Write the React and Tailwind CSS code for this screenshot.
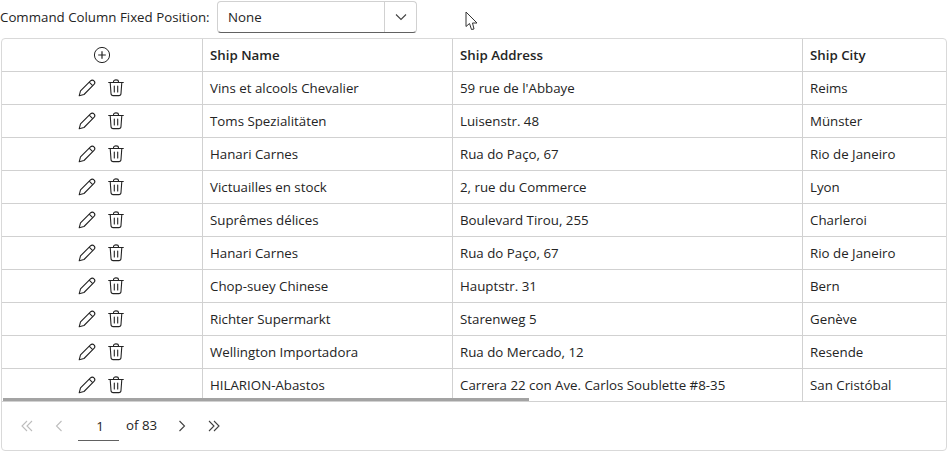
const rows = [
  ["Vins et alcools Chevalier", "59 rue de l'Abbaye", "Reims"],
  ["Toms Spezialitäten", "Luisenstr. 48", "Münster"],
  ["Hanari Carnes", "Rua do Paço, 67", "Rio de Janeiro"],
  ["Victuailles en stock", "2, rue du Commerce", "Lyon"],
  ["Suprêmes délices", "Boulevard Tirou, 255", "Charleroi"],
  ["Hanari Carnes", "Rua do Paço, 67", "Rio de Janeiro"],
  ["Chop-suey Chinese", "Hauptstr. 31", "Bern"],
  ["Richter Supermarkt", "Starenweg 5", "Genève"],
  ["Wellington Importadora", "Rua do Mercado, 12", "Resende"],
  ["HILARION-Abastos", "Carrera 22 con Ave. Carlos Soublette #8-35", "San Cristóbal"],
];

const Pencil = () => (
  <svg width="18" height="18" viewBox="0 0 18 18" fill="none" stroke="#242424" strokeWidth="1.1" strokeLinejoin="round">
    <path d="M1.2 16.8 L2.5 11.9 L12.5 1.9 C13.5 0.9 15.1 0.9 16 1.9 C17 2.9 17 4.4 16 5.4 L6 15.5 Z" />
    <path d="M11.2 3.2 L14.7 6.7" />
  </svg>
);
const Trash = () => (
  <svg width="16" height="18" viewBox="0 0 16 18" fill="none" stroke="#242424" strokeWidth="1.1" strokeLinecap="round">
    <path d="M0.7 3.5 H15.3" />
    <path d="M5.5 3.5 V2.8 C5.5 1.6 6.5 0.9 8 0.9 C9.5 0.9 10.5 1.6 10.5 2.8 V3.5" />
    <path d="M2.2 3.5 L3 14.5 C3.1 15.9 4 16.6 5.2 16.6 H10.8 C12 16.6 12.9 15.9 13 14.5 L13.8 3.5" />
    <path d="M6.3 7 V13" />
    <path d="M9.7 7 V13" />
  </svg>
);
const Plus = () => (
  <svg width="18" height="18" viewBox="0 0 18 18" fill="none" stroke="#242424" strokeWidth="1">
    <circle cx="9" cy="9" r="7.6" />
    <path d="M9 5.2 V12.8 M5.2 9 H12.8" strokeWidth="1.2" />
  </svg>
);
const Chev = ({ d, color = "#424242" }) => (
  <svg width="16" height="16" viewBox="0 0 16 16" fill="none" stroke={color} strokeWidth="1.1">
    <path d={d} />
  </svg>
);

export default function App() {
  return (
    <div className="relative w-[948px] h-[452px] bg-white overflow-hidden text-[13.3px] text-[#242424] font-['Open_Sans','Noto_Sans',sans-serif]">
      <div className="h-[38px] flex items-start pt-px">
        <label className="h-[32px] pt-px flex items-center w-[217px] shrink-0 whitespace-nowrap">Command Column Fixed Position:</label>
        <div className="w-[200px] h-[32px] flex rounded border border-[#d1d1d1] border-b-[#616161]">
          <span className="flex-1 pl-[10px] pt-px flex items-center border-r border-[#d1d1d1]">None</span>
          <span className="w-[31px] flex items-center justify-center">
            <Chev d="M3 5.5 L8 10.5 L13 5.5" />
          </span>
        </div>
      </div>
      <svg className="absolute left-[465px] top-[11px]" width="14" height="20" viewBox="0 0 14 20" fill="#fff" stroke="#333" strokeWidth="1">
        <path d="M1 1 V15.5 L4.5 12.5 L6.5 18.5 L9 18 L7.5 12 L12 12 Z" />
      </svg>

      <div className="relative ml-px w-[946px] h-[413px] border border-[#d9d9d9] rounded-sm overflow-hidden flex flex-col">
        <div className="flex h-[33px] border-b border-[#d1d1d1] font-semibold shrink-0">
          <div className="w-[201px] shrink-0 border-r border-[#d1d1d1] flex items-center justify-center"><Plus /></div>
          <div className="w-[250px] shrink-0 border-r border-[#d1d1d1] flex items-center pl-[7px] pt-px">Ship Name</div>
          <div className="w-[350px] shrink-0 border-r border-[#d1d1d1] flex items-center pl-[7px] pt-px">Ship Address</div>
          <div className="w-[150px] shrink-0 flex items-center pl-[7px] pt-px">Ship City</div>
        </div>
        {rows.map((r, i) => (
          <div key={i} className="flex h-[33px] border-b border-[#d1d1d1] shrink-0">
            <div className="w-[201px] shrink-0 border-r border-[#d1d1d1] flex items-center justify-center gap-[12px] pr-[2px]">
              <Pencil />
              <Trash />
            </div>
            <div className="w-[250px] shrink-0 border-r border-[#d1d1d1] flex items-center pl-[7px] pt-px whitespace-nowrap">{r[0]}</div>
            <div className="w-[350px] shrink-0 border-r border-[#d1d1d1] flex items-center pl-[7px] pt-px whitespace-nowrap">{r[1]}</div>
            <div className="w-[150px] shrink-0 flex items-center pl-[7px] pt-px whitespace-nowrap">{r[2]}</div>
          </div>
        ))}
        <div className="absolute left-px top-[359px] w-[526px] h-[3px] bg-[#a3a3a3]" />
        <div className="flex-1 flex items-center pl-[17px] pb-px">
          <Chev d="M8 3 L3 8 L8 13 M13 3 L8 8 L13 13" color="#bdbdbd" />
          <span className="ml-[16px]"><Chev d="M10.5 3 L5.5 8 L10.5 13" color="#bdbdbd" /></span>
          <div className="ml-[11px] w-[41px] h-[31px] pt-[3px] pl-[3px] border-b border-[#616161] flex items-center justify-center">1</div>
          <span className="ml-[7px]">of 83</span>
          <span className="ml-[17px]"><Chev d="M5.5 3 L10.5 8 L5.5 13" /></span>
          <span className="ml-[16px]"><Chev d="M3 3 L8 8 L3 13 M8 3 L13 8 L8 13" /></span>
        </div>
      </div>
    </div>
  );
}
